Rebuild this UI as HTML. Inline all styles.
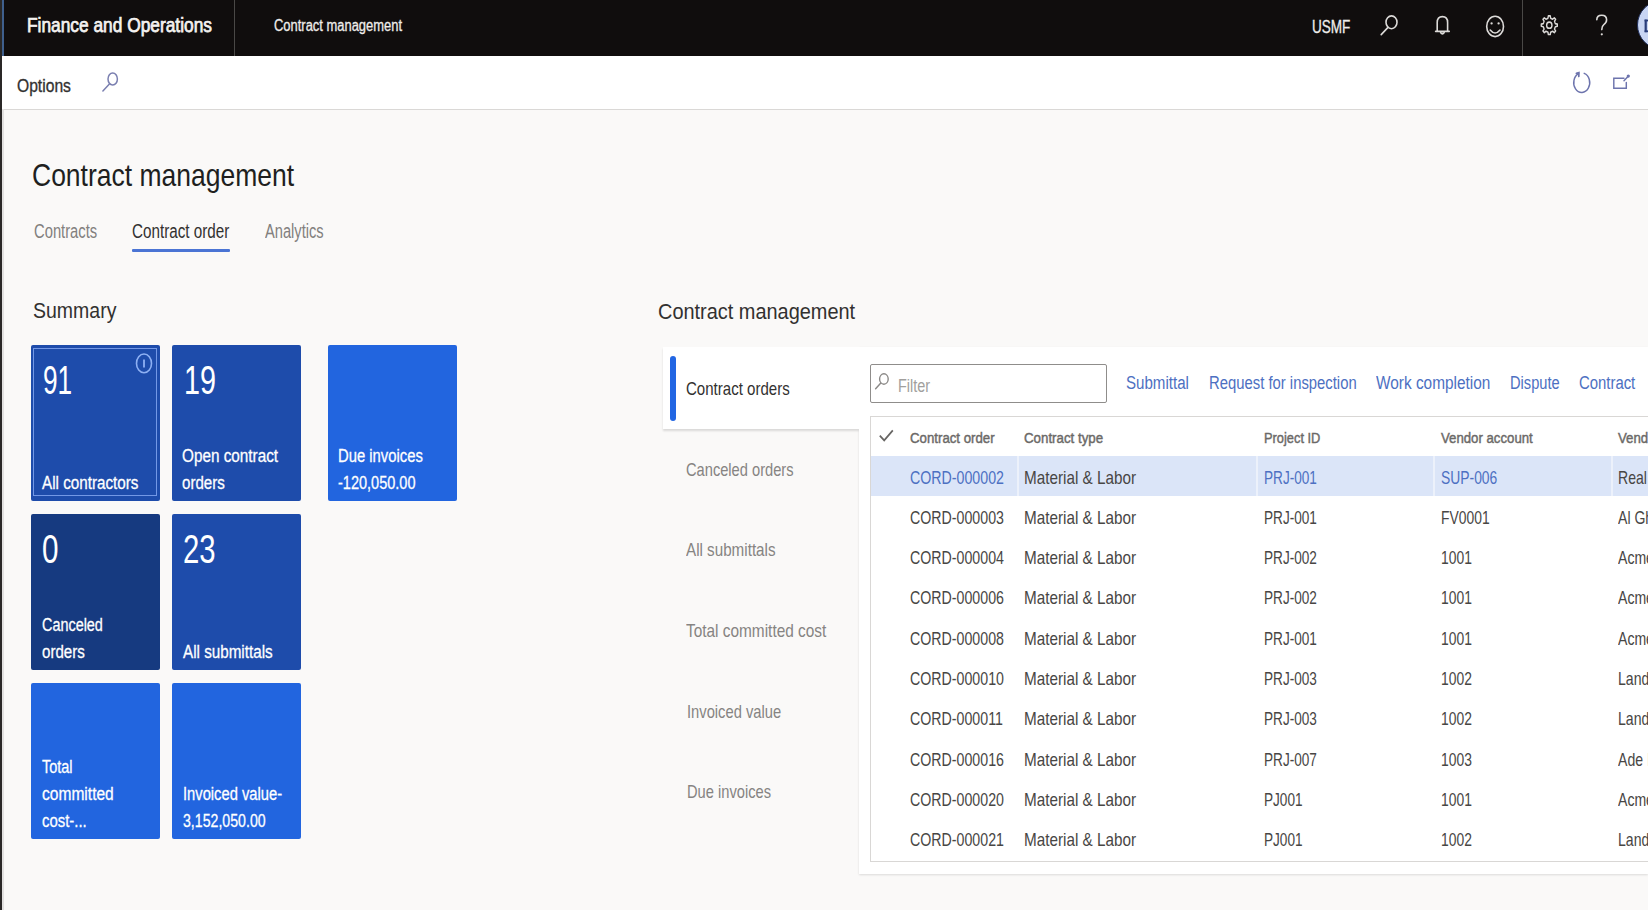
<!DOCTYPE html>
<html><head><meta charset="utf-8"><title>Contract management</title>
<style>
html,body{margin:0;padding:0}
body{width:1648px;height:910px;overflow:hidden;position:relative;background:#faf9f8;font-family:"Liberation Sans",sans-serif}
.b{position:absolute}
.t{position:absolute;white-space:pre;line-height:1;transform-origin:0 0}
.ov{position:absolute;left:0;top:0;pointer-events:none}
.tile{position:absolute;width:129.5px;height:155.5px;border-radius:2px}
</style></head><body>
<div class="b" style="left:0;top:0;width:2px;height:910px;background:#2a2827"></div>
<div class="b" style="left:2px;top:0;width:1646px;height:56px;background:#100d0d"></div>
<div class="b" style="left:2px;top:0;width:2px;height:56px;background:#3f5f8c"></div>
<div class="b" style="left:234px;top:0;width:1px;height:56px;background:#4a4846"></div>
<div class="b" style="left:1522px;top:0;width:1px;height:56px;background:#4a4846"></div>
<div class="b" style="left:2px;top:56px;width:1646px;height:52.5px;background:#fff;border-bottom:1.5px solid #dad8d6"></div>
<div class="b" style="left:132px;top:249px;width:97.5px;height:3px;background:#4a74d4;border-radius:1px"></div>
<div class="tile" style="left:31.2px;top:345px;width:129.2px;background:#1e4cab"></div>
<div class="b" style="left:33.4px;top:348.4px;width:121.8px;height:145.8px;border:1.5px solid #7398e6"></div>
<div class="tile" style="left:171.7px;top:345px;background:#1e4cab"></div>
<div class="tile" style="left:327.6px;top:345px;background:#2265df"></div>
<div class="tile" style="left:31.2px;top:514.2px;width:129.2px;background:#163a80"></div>
<div class="tile" style="left:171.7px;top:514.2px;background:#1e4cab"></div>
<div class="tile" style="left:31.2px;top:683px;width:129.2px;background:#2265df"></div>
<div class="tile" style="left:171.7px;top:683px;background:#2265df"></div>
<!-- right panel -->
<div class="b" style="left:859px;top:347px;width:789px;height:527px;background:#fff;box-shadow:0 1px 2px rgba(0,0,0,.12)"></div>
<div class="b" style="left:663px;top:347px;width:196px;height:82px;background:#fff;box-shadow:0 1.5px 2px rgba(0,0,0,.13)"></div>
<div class="b" style="left:859px;top:347px;width:8px;height:90px;background:#fff"></div>
<div class="b" style="left:670px;top:356px;width:5.5px;height:64.5px;background:#2266e3;border-radius:3px"></div>
<div class="b" style="left:869.6px;top:363.5px;width:235.2px;height:37px;border:1px solid #8f8d8b;border-radius:2px;background:#fff"></div>
<div class="b" style="left:869.8px;top:415.8px;width:800px;height:444px;border:1px solid #d9d7d5;background:#fff"></div>
<div class="b" style="left:870.8px;top:456px;width:778px;height:40px;background:#dbe5f8"></div>
<div class="b" style="left:1016.5px;top:456px;width:2px;height:40px;background:#ecf1fb"></div>
<div class="b" style="left:1255.5px;top:456px;width:2px;height:40px;background:#ecf1fb"></div>
<div class="b" style="left:1432.5px;top:456px;width:2px;height:40px;background:#ecf1fb"></div>
<div class="b" style="left:1610.5px;top:456px;width:2px;height:40px;background:#ecf1fb"></div>
<div class="b" style="left:2px;top:109px;width:1.5px;height:801px;background:#e2e1e0"></div>
<span class="t" style="left:26.90px;top:15px;font-size:20.6px;font-weight:400;color:#f4f2f0;transform:scaleX(0.8414);-webkit-text-stroke:0.75px #f4f2f0;">Finance and Operations</span>
<span class="t" style="left:274.00px;top:18px;font-size:16px;font-weight:400;color:#efedeb;transform:scaleX(0.8086);-webkit-text-stroke:0.3px #efedeb;">Contract management</span>
<span class="t" style="left:1311.60px;top:19px;font-size:17.5px;font-weight:400;color:#efedeb;transform:scaleX(0.7745);-webkit-text-stroke:0.3px #efedeb;">USMF</span>
<span class="t" style="left:17.00px;top:76px;font-size:19px;font-weight:400;color:#323130;transform:scaleX(0.8232);-webkit-text-stroke:0.35px #323130;">Options</span>
<span class="t" style="left:31.80px;top:160px;font-size:31.7px;font-weight:400;color:#201f1e;transform:scaleX(0.8360);">Contract management</span>
<span class="t" style="left:34.20px;top:222px;font-size:19.5px;font-weight:400;color:#82807e;transform:scaleX(0.7574);">Contracts</span>
<span class="t" style="left:132.00px;top:222px;font-size:19.5px;font-weight:400;color:#323130;transform:scaleX(0.7814);">Contract order</span>
<span class="t" style="left:264.50px;top:222px;font-size:19.5px;font-weight:400;color:#82807e;transform:scaleX(0.7524);">Analytics</span>
<span class="t" style="left:32.80px;top:300px;font-size:22px;font-weight:400;color:#323130;transform:scaleX(0.8861);">Summary</span>
<span class="t" style="left:42.70px;top:359px;font-size:41.5px;font-weight:400;color:#ffffff;transform:scaleX(0.6327);">91</span>
<span class="t" style="left:41.70px;top:474px;font-size:18.9px;font-weight:400;color:#ffffff;transform:scaleX(0.8060);-webkit-text-stroke:0.3px #fff;">All contractors</span>
<span class="t" style="left:184.20px;top:359px;font-size:41.5px;font-weight:400;color:#ffffff;transform:scaleX(0.6934);">19</span>
<span class="t" style="left:181.70px;top:447px;font-size:18.9px;font-weight:400;color:#ffffff;transform:scaleX(0.8095);-webkit-text-stroke:0.3px #fff;">Open contract</span>
<span class="t" style="left:181.70px;top:474px;font-size:18.9px;font-weight:400;color:#ffffff;transform:scaleX(0.8000);-webkit-text-stroke:0.3px #fff;">orders</span>
<span class="t" style="left:337.90px;top:447px;font-size:18.9px;font-weight:400;color:#ffffff;transform:scaleX(0.7846);-webkit-text-stroke:0.3px #fff;">Due invoices</span>
<span class="t" style="left:338.00px;top:474px;font-size:18.9px;font-weight:400;color:#ffffff;transform:scaleX(0.7682);-webkit-text-stroke:0.3px #fff;">-120,050.00</span>
<span class="t" style="left:42.00px;top:528px;font-size:41.5px;font-weight:400;color:#ffffff;transform:scaleX(0.7151);">0</span>
<span class="t" style="left:41.50px;top:616px;font-size:18.9px;font-weight:400;color:#ffffff;transform:scaleX(0.7627);-webkit-text-stroke:0.3px #fff;">Canceled</span>
<span class="t" style="left:41.50px;top:643px;font-size:18.9px;font-weight:400;color:#ffffff;transform:scaleX(0.8000);-webkit-text-stroke:0.3px #fff;">orders</span>
<span class="t" style="left:182.60px;top:528px;font-size:41.5px;font-weight:400;color:#ffffff;transform:scaleX(0.7064);">23</span>
<span class="t" style="left:182.60px;top:643px;font-size:18.9px;font-weight:400;color:#ffffff;transform:scaleX(0.8056);-webkit-text-stroke:0.3px #fff;">All submittals</span>
<span class="t" style="left:42.30px;top:758px;font-size:18.9px;font-weight:400;color:#ffffff;transform:scaleX(0.7666);-webkit-text-stroke:0.3px #fff;">Total</span>
<span class="t" style="left:41.80px;top:785px;font-size:18.9px;font-weight:400;color:#ffffff;transform:scaleX(0.8237);-webkit-text-stroke:0.3px #fff;">committed</span>
<span class="t" style="left:41.80px;top:812px;font-size:18.9px;font-weight:400;color:#ffffff;transform:scaleX(0.7884);-webkit-text-stroke:0.3px #fff;">cost-...</span>
<span class="t" style="left:183.20px;top:785px;font-size:18.9px;font-weight:400;color:#ffffff;transform:scaleX(0.7796);-webkit-text-stroke:0.3px #fff;">Invoiced value-</span>
<span class="t" style="left:183.20px;top:812px;font-size:18.9px;font-weight:400;color:#ffffff;transform:scaleX(0.7494);-webkit-text-stroke:0.3px #fff;">3,152,050.00</span>
<span class="t" style="left:657.90px;top:301px;font-size:22.5px;font-weight:400;color:#323130;transform:scaleX(0.8854);">Contract management</span>
<span class="t" style="left:686.20px;top:380px;font-size:18.2px;font-weight:400;color:#323130;transform:scaleX(0.8275);">Contract orders</span>
<span class="t" style="left:686.40px;top:461px;font-size:18.2px;font-weight:400;color:#868482;transform:scaleX(0.8058);">Canceled orders</span>
<span class="t" style="left:686.40px;top:541px;font-size:18.2px;font-weight:400;color:#868482;transform:scaleX(0.8357);">All submittals</span>
<span class="t" style="left:686.40px;top:622px;font-size:18.2px;font-weight:400;color:#868482;transform:scaleX(0.8464);">Total committed cost</span>
<span class="t" style="left:686.60px;top:703px;font-size:18.2px;font-weight:400;color:#868482;transform:scaleX(0.8096);">Invoiced value</span>
<span class="t" style="left:686.60px;top:783px;font-size:18.2px;font-weight:400;color:#868482;transform:scaleX(0.8071);">Due invoices</span>
<span class="t" style="left:897.90px;top:377px;font-size:18px;font-weight:400;color:#a19f9d;transform:scaleX(0.8026);">Filter</span>
<span class="t" style="left:1125.80px;top:374px;font-size:18.8px;font-weight:400;color:#4d70c2;transform:scaleX(0.8040);">Submittal</span>
<span class="t" style="left:1208.50px;top:374px;font-size:18.8px;font-weight:400;color:#4d70c2;transform:scaleX(0.7901);">Request for inspection</span>
<span class="t" style="left:1375.60px;top:374px;font-size:18.8px;font-weight:400;color:#4d70c2;transform:scaleX(0.8191);">Work completion</span>
<span class="t" style="left:1509.90px;top:374px;font-size:18.8px;font-weight:400;color:#4d70c2;transform:scaleX(0.7796);">Dispute</span>
<span class="t" style="left:1578.70px;top:374px;font-size:18.8px;font-weight:400;color:#4d70c2;transform:scaleX(0.7925);">Contract</span>
<span class="t" style="left:909.60px;top:430px;font-size:15.4px;font-weight:400;color:#6b6967;transform:scaleX(0.8605);-webkit-text-stroke:0.45px #6b6967;">Contract order</span>
<span class="t" style="left:1024.00px;top:430px;font-size:15.4px;font-weight:400;color:#6b6967;transform:scaleX(0.8648);-webkit-text-stroke:0.45px #6b6967;">Contract type</span>
<span class="t" style="left:1263.80px;top:430px;font-size:15.4px;font-weight:400;color:#6b6967;transform:scaleX(0.8342);-webkit-text-stroke:0.45px #6b6967;">Project ID</span>
<span class="t" style="left:1440.70px;top:430px;font-size:15.4px;font-weight:400;color:#6b6967;transform:scaleX(0.8577);-webkit-text-stroke:0.45px #6b6967;">Vendor account</span>
<span class="t" style="left:1617.70px;top:430px;font-size:15.4px;font-weight:400;color:#6b6967;transform:scaleX(0.8600);-webkit-text-stroke:0.45px #6b6967;">Vendor name</span>
<span class="t" style="left:909.50px;top:469px;font-size:18.5px;font-weight:400;color:#4d70c2;transform:scaleX(0.7680);">CORD-000002</span>
<span class="t" style="left:1024.40px;top:469px;font-size:18.5px;font-weight:400;color:#484644;transform:scaleX(0.8250);">Material &amp; Labor</span>
<span class="t" style="left:1263.80px;top:469px;font-size:18.5px;font-weight:400;color:#4d70c2;transform:scaleX(0.7350);">PRJ-001</span>
<span class="t" style="left:1440.70px;top:469px;font-size:18.5px;font-weight:400;color:#4d70c2;transform:scaleX(0.7500);">SUP-006</span>
<span class="t" style="left:1617.70px;top:469px;font-size:18.5px;font-weight:400;color:#484644;transform:scaleX(0.7600);">Real Estate</span>
<span class="t" style="left:909.50px;top:509px;font-size:18.5px;font-weight:400;color:#484644;transform:scaleX(0.7680);">CORD-000003</span>
<span class="t" style="left:1024.40px;top:509px;font-size:18.5px;font-weight:400;color:#484644;transform:scaleX(0.8250);">Material &amp; Labor</span>
<span class="t" style="left:1263.80px;top:509px;font-size:18.5px;font-weight:400;color:#484644;transform:scaleX(0.7350);">PRJ-001</span>
<span class="t" style="left:1440.70px;top:509px;font-size:18.5px;font-weight:400;color:#484644;transform:scaleX(0.7500);">FV0001</span>
<span class="t" style="left:1617.70px;top:509px;font-size:18.5px;font-weight:400;color:#484644;transform:scaleX(0.7600);">Al Ghurair</span>
<span class="t" style="left:909.50px;top:549px;font-size:18.5px;font-weight:400;color:#484644;transform:scaleX(0.7680);">CORD-000004</span>
<span class="t" style="left:1024.40px;top:549px;font-size:18.5px;font-weight:400;color:#484644;transform:scaleX(0.8250);">Material &amp; Labor</span>
<span class="t" style="left:1263.80px;top:549px;font-size:18.5px;font-weight:400;color:#484644;transform:scaleX(0.7350);">PRJ-002</span>
<span class="t" style="left:1440.70px;top:549px;font-size:18.5px;font-weight:400;color:#484644;transform:scaleX(0.7500);">1001</span>
<span class="t" style="left:1617.70px;top:549px;font-size:18.5px;font-weight:400;color:#484644;transform:scaleX(0.7600);">Acme Inc</span>
<span class="t" style="left:909.50px;top:589px;font-size:18.5px;font-weight:400;color:#484644;transform:scaleX(0.7680);">CORD-000006</span>
<span class="t" style="left:1024.40px;top:589px;font-size:18.5px;font-weight:400;color:#484644;transform:scaleX(0.8250);">Material &amp; Labor</span>
<span class="t" style="left:1263.80px;top:589px;font-size:18.5px;font-weight:400;color:#484644;transform:scaleX(0.7350);">PRJ-002</span>
<span class="t" style="left:1440.70px;top:589px;font-size:18.5px;font-weight:400;color:#484644;transform:scaleX(0.7500);">1001</span>
<span class="t" style="left:1617.70px;top:589px;font-size:18.5px;font-weight:400;color:#484644;transform:scaleX(0.7600);">Acme Inc</span>
<span class="t" style="left:909.50px;top:630px;font-size:18.5px;font-weight:400;color:#484644;transform:scaleX(0.7680);">CORD-000008</span>
<span class="t" style="left:1024.40px;top:630px;font-size:18.5px;font-weight:400;color:#484644;transform:scaleX(0.8250);">Material &amp; Labor</span>
<span class="t" style="left:1263.80px;top:630px;font-size:18.5px;font-weight:400;color:#484644;transform:scaleX(0.7350);">PRJ-001</span>
<span class="t" style="left:1440.70px;top:630px;font-size:18.5px;font-weight:400;color:#484644;transform:scaleX(0.7500);">1001</span>
<span class="t" style="left:1617.70px;top:630px;font-size:18.5px;font-weight:400;color:#484644;transform:scaleX(0.7600);">Acme Inc</span>
<span class="t" style="left:909.50px;top:670px;font-size:18.5px;font-weight:400;color:#484644;transform:scaleX(0.7680);">CORD-000010</span>
<span class="t" style="left:1024.40px;top:670px;font-size:18.5px;font-weight:400;color:#484644;transform:scaleX(0.8250);">Material &amp; Labor</span>
<span class="t" style="left:1263.80px;top:670px;font-size:18.5px;font-weight:400;color:#484644;transform:scaleX(0.7350);">PRJ-003</span>
<span class="t" style="left:1440.70px;top:670px;font-size:18.5px;font-weight:400;color:#484644;transform:scaleX(0.7500);">1002</span>
<span class="t" style="left:1617.70px;top:670px;font-size:18.5px;font-weight:400;color:#484644;transform:scaleX(0.7600);">Landscape</span>
<span class="t" style="left:909.50px;top:710px;font-size:18.5px;font-weight:400;color:#484644;transform:scaleX(0.7680);">CORD-000011</span>
<span class="t" style="left:1024.40px;top:710px;font-size:18.5px;font-weight:400;color:#484644;transform:scaleX(0.8250);">Material &amp; Labor</span>
<span class="t" style="left:1263.80px;top:710px;font-size:18.5px;font-weight:400;color:#484644;transform:scaleX(0.7350);">PRJ-003</span>
<span class="t" style="left:1440.70px;top:710px;font-size:18.5px;font-weight:400;color:#484644;transform:scaleX(0.7500);">1002</span>
<span class="t" style="left:1617.70px;top:710px;font-size:18.5px;font-weight:400;color:#484644;transform:scaleX(0.7600);">Landscape</span>
<span class="t" style="left:909.50px;top:751px;font-size:18.5px;font-weight:400;color:#484644;transform:scaleX(0.7680);">CORD-000016</span>
<span class="t" style="left:1024.40px;top:751px;font-size:18.5px;font-weight:400;color:#484644;transform:scaleX(0.8250);">Material &amp; Labor</span>
<span class="t" style="left:1263.80px;top:751px;font-size:18.5px;font-weight:400;color:#484644;transform:scaleX(0.7350);">PRJ-007</span>
<span class="t" style="left:1440.70px;top:751px;font-size:18.5px;font-weight:400;color:#484644;transform:scaleX(0.7500);">1003</span>
<span class="t" style="left:1617.70px;top:751px;font-size:18.5px;font-weight:400;color:#484644;transform:scaleX(0.7600);">Ade Inc</span>
<span class="t" style="left:909.50px;top:791px;font-size:18.5px;font-weight:400;color:#484644;transform:scaleX(0.7680);">CORD-000020</span>
<span class="t" style="left:1024.40px;top:791px;font-size:18.5px;font-weight:400;color:#484644;transform:scaleX(0.8250);">Material &amp; Labor</span>
<span class="t" style="left:1263.80px;top:791px;font-size:18.5px;font-weight:400;color:#484644;transform:scaleX(0.7350);">PJ001</span>
<span class="t" style="left:1440.70px;top:791px;font-size:18.5px;font-weight:400;color:#484644;transform:scaleX(0.7500);">1001</span>
<span class="t" style="left:1617.70px;top:791px;font-size:18.5px;font-weight:400;color:#484644;transform:scaleX(0.7600);">Acme Inc</span>
<span class="t" style="left:909.50px;top:831px;font-size:18.5px;font-weight:400;color:#484644;transform:scaleX(0.7680);">CORD-000021</span>
<span class="t" style="left:1024.40px;top:831px;font-size:18.5px;font-weight:400;color:#484644;transform:scaleX(0.8250);">Material &amp; Labor</span>
<span class="t" style="left:1263.80px;top:831px;font-size:18.5px;font-weight:400;color:#484644;transform:scaleX(0.7350);">PJ001</span>
<span class="t" style="left:1440.70px;top:831px;font-size:18.5px;font-weight:400;color:#484644;transform:scaleX(0.7500);">1002</span>
<span class="t" style="left:1617.70px;top:831px;font-size:18.5px;font-weight:400;color:#484644;transform:scaleX(0.7600);">Landscape</span>

<svg class="ov" width="1648" height="910" viewBox="0 0 1648 910">
 <g fill="none" stroke="#dcdad8" stroke-width="1.6" stroke-linecap="round">
  <ellipse cx="1391.5" cy="22.3" rx="5.5" ry="6.4"/>
  <line x1="1388" y1="27.4" x2="1381.2" y2="34.6"/>
  <path d="M1437.2 31.2 L1437.2 22.5 Q1437.2 16.6 1442.4 16.6 Q1447.6 16.6 1447.6 22.5 L1447.6 31.2"/>
  <line x1="1435.6" y1="31.4" x2="1449.2" y2="31.4"/>
  <path d="M1440.6 32.6 Q1442.4 35.4 1444.2 32.6" fill="#dcdad8"/>
  <ellipse cx="1495.1" cy="26.4" rx="8.4" ry="10.2"/>
  <path d="M1490.2 30 Q1495.1 36 1500 30"/>
  <path d="M1596.8 19.8 Q1596.8 15.2 1601.7 15.2 Q1606.6 15.2 1606.6 19.8 Q1606.6 22.8 1603.8 24.6 Q1601.8 26 1601.8 29.6"/>
 </g>
 <g fill="#dcdad8">
  <circle cx="1491.6" cy="23.4" r="1.15"/><circle cx="1498.6" cy="23.4" r="1.15"/>
  <circle cx="1601.8" cy="34.3" r="1.1"/>
 </g>
 <g transform="translate(1549.3 25.2) scale(0.86 1)" fill="none" stroke="#dcdad8" stroke-width="1.6" stroke-linejoin="round">
  <path d="M7.03 -1.54 L9.33 -1.11 L9.33 1.11 L7.03 1.54 L6.52 2.70 L6.06 3.88 L7.39 5.81 L5.81 7.39 L3.88 6.06 L2.70 6.52 L1.54 7.03 L1.11 9.33 L-1.11 9.33 L-1.54 7.03 L-2.70 6.52 L-3.88 6.06 L-5.81 7.39 L-7.39 5.81 L-6.06 3.88 L-6.52 2.70 L-7.03 1.54 L-9.33 1.11 L-9.33 -1.11 L-7.03 -1.54 L-6.52 -2.70 L-6.06 -3.88 L-7.39 -5.81 L-5.81 -7.39 L-3.88 -6.06 L-2.70 -6.52 L-1.54 -7.03 L-1.11 -9.33 L1.11 -9.33 L1.54 -7.03 L2.70 -6.52 L3.88 -6.06 L5.81 -7.39 L7.39 -5.81 L6.06 -3.88 L6.52 -2.70 Z"/>
  <circle cx="0" cy="0" r="3.1"/>
 </g>
 <circle cx="1661.7" cy="25" r="24.2" fill="#c8d5f3" stroke="#22305c" stroke-width="1"/>
 <rect x="1644.6" y="19.6" width="2.2" height="12.6" fill="#2a3d7a"/>
 <rect x="1644.6" y="19.6" width="4" height="1.8" fill="#2a3d7a"/>
 <rect x="1644.6" y="30.4" width="4" height="1.8" fill="#2a3d7a"/>
 <g fill="none" stroke="#7a7fb0" stroke-width="1.5" stroke-linecap="round">
  <ellipse cx="112.7" cy="79" rx="4.7" ry="6.1"/>
  <line x1="109.4" y1="84" x2="102.9" y2="91"/>
 </g>
  <g fill="none" stroke="#6d74ad" stroke-width="1.45" stroke-linecap="round">
  <path d="M1584.2 73.3 A8 9.8 0 1 1 1578.6 73.6"/>
  <path d="M1576.4 73.4 L1578.9 72.6 L1578.8 76.4" stroke-width="1.7"/>
  <path d="M1624 78.3 L1613.8 78.3 L1613.8 88.3 L1626.3 88.3 L1626.3 82.4"/>
  <line x1="1624" y1="80.8" x2="1628.2" y2="76.2"/>
  <circle cx="1628.3" cy="76" r="0.9" fill="#6d74ad"/>
 </g>
 <g fill="none" stroke="#8eb0f3" stroke-width="1.6">
  <ellipse cx="144" cy="363.4" rx="7.5" ry="9.4"/>
  <line x1="144" y1="359.6" x2="144" y2="367.4" stroke-width="1.8"/>
 </g>
 <g fill="none" stroke="#8a8886" stroke-width="1.4" stroke-linecap="round">
  <ellipse cx="883.9" cy="379" rx="4.3" ry="5.2"/>
  <line x1="880.6" y1="383.2" x2="875.6" y2="388.8"/>
 </g>
 <polyline points="879.8,435.6 884.2,440.4 892.8,430.4" fill="none" stroke="#676563" stroke-width="1.7"/>
</svg>

</body></html>
